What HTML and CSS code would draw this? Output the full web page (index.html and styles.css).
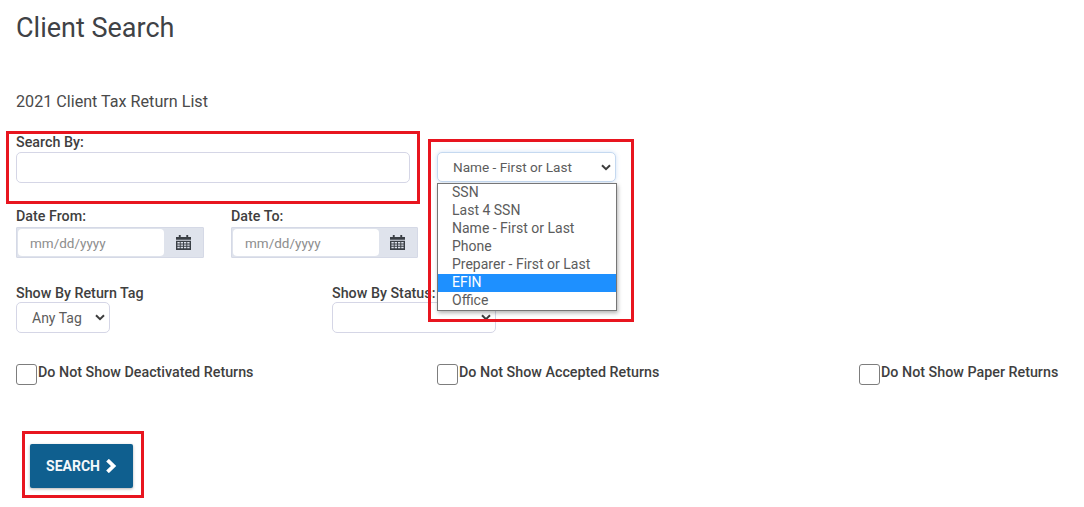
FILE: index.html
```html
<!DOCTYPE html>
<html lang="en">
<head>
<meta charset="utf-8">
<title>Client Search</title>
<link rel="stylesheet" href="styles.css">
</head>
<body>
<main class="page">
  <h1 class="title">Client Search</h1>
  <p class="subtitle">2021 Client Tax Return List</p>

  <div class="search-row">
    <div class="field search-field">
      <label class="label">Search By:</label>
      <div class="input"></div>
    </div>
    <div class="select search-type">
      <span>Name - First or Last</span>
      <svg class="chev" viewBox="0 0 10 7"><path d="M1 1.200 5 5.200 9 1.200" fill="none" stroke="#3d3d3d" stroke-width="2"/></svg>
    </div>
  </div>

  <div class="date-row">
    <div class="field date-field">
      <label class="label">Date From:</label>
      <div class="date-group">
        <div class="date-input">mm/dd/yyyy</div>
        <div class="date-addon">
          <svg class="cal" viewBox="0 0 16 16"><path d="M3 0h2v2h6V0h2v2h3v3H0V2h3z" fill="#3a3f45"/><path fill-rule="evenodd" d="M0 6h16v10H0zM1.500 7.500v1.500h2.500V7.500zm3.500 0v1.500h2.500V7.500zm3.500 0v1.500h2.500V7.500zm3.500 0v1.500h2.500V7.500zM1.500 10v1.500h2.500V10zm3.500 0v1.500h2.500V10zm3.500 0v1.500h2.500V10zm3.500 0v1.500h2.500V10zM1.500 12.500V14h2.500v-1.500zm3.500 0V14h2.500v-1.500zm3.500 0V14h2.500v-1.500zm3.500 0V14h2.500v-1.500z" fill="#3a3f45"/></svg>
        </div>
      </div>
    </div>
    <div class="field date-field">
      <label class="label">Date To:</label>
      <div class="date-group">
        <div class="date-input">mm/dd/yyyy</div>
        <div class="date-addon">
          <svg class="cal" viewBox="0 0 16 16"><path d="M3 0h2v2h6V0h2v2h3v3H0V2h3z" fill="#3a3f45"/><path fill-rule="evenodd" d="M0 6h16v10H0zM1.500 7.500v1.500h2.500V7.500zm3.500 0v1.500h2.500V7.500zm3.500 0v1.500h2.500V7.500zm3.500 0v1.500h2.500V7.500zM1.500 10v1.500h2.500V10zm3.500 0v1.500h2.500V10zm3.500 0v1.500h2.500V10zm3.500 0v1.500h2.500V10zM1.500 12.500V14h2.500v-1.500zm3.500 0V14h2.500v-1.500zm3.500 0V14h2.500v-1.500zm3.500 0V14h2.500v-1.500z" fill="#3a3f45"/></svg>
        </div>
      </div>
    </div>
  </div>

  <div class="show-row">
    <div class="field tag-field">
      <label class="label">Show By Return Tag</label>
      <div class="select tag-select">
        <span>Any Tag</span>
        <svg class="chev" viewBox="0 0 10 7"><path d="M1 1.200 5 5.200 9 1.200" fill="none" stroke="#3d3d3d" stroke-width="2"/></svg>
      </div>
    </div>
    <div class="field status-field">
      <label class="label">Show By Status:</label>
      <div class="select status-select">
        <span></span>
        <svg class="chev" viewBox="0 0 10 7"><path d="M1 1.200 5 5.200 9 1.200" fill="none" stroke="#3d3d3d" stroke-width="2"/></svg>
      </div>
    </div>
  </div>

  <div class="check-row">
    <div class="check"><span class="box"></span><span class="label check-text">Do Not Show Deactivated Returns</span></div>
    <div class="check"><span class="box"></span><span class="label check-text">Do Not Show Accepted Returns</span></div>
    <div class="check"><span class="box"></span><span class="label check-text">Do Not Show Paper Returns</span></div>
  </div>

  <button class="search-btn" type="button">SEARCH
    <svg class="btn-chev" viewBox="0 0 12 14"><path d="M2.500 1.200 8.500 7 2.500 12.800" fill="none" stroke="#fff" stroke-width="3.800"/></svg>
  </button>
</main>

<ul class="dropdown">
  <li>SSN</li>
  <li>Last 4 SSN</li>
  <li>Name - First or Last</li>
  <li>Phone</li>
  <li>Preparer - First or Last</li>
  <li class="active">EFIN</li>
  <li>Office</li>
</ul>

<div class="mark mark-search"></div>
<div class="mark mark-select"></div>
<div class="mark mark-button"></div>
</body>
</html>
```

FILE: styles.css
```css
* { box-sizing: border-box; }

html, body { margin: 0; height: 507px; overflow: hidden; background: #fff; }

body {
  position: relative;
  font-family: Roboto, "Liberation Sans", sans-serif;
  color: #454545;
  font-size: 14px;
}

.page { padding: 11px 16px 0; }

.title {
  margin: 0;
  height: 34px;
  font-size: 27px;
  line-height: 34px;
  font-weight: 400;
  color: #3f4246;
}

.subtitle {
  margin: 47px 0 0;
  height: 20px;
  font-size: 16.150px;
  line-height: 20px;
  color: #4a4a4a;
}

.field { display: flex; flex-direction: column; }

.label {
  font-size: 14.300px;
  line-height: 18px;
  font-weight: 500;
  color: #3f3f3f;
}

.search-row { display: flex; align-items: flex-end; margin-top: 21px; }

.search-field { width: 394px; }
.search-field .label { height: 19px; }

.input {
  height: 31px;
  border: 1px solid #d5d6e6;
  border-radius: 5px;
  background: #fff;
}

.select {
  display: flex;
  align-items: center;
  justify-content: space-between;
  border: 1px solid #d5d6e6;
  border-radius: 5px;
  background: #fff;
  color: #5c5c5c;
  font-size: 14px;
}

.search-type {
  width: 179px;
  height: 30px;
  margin: 0 0 1px 27px;
  padding: 0 4px 0 15px;
  font-size: 13.600px;
  border-color: #c5d9f0;
  box-shadow: 0 0 4px rgba(120, 170, 230, .35);
}

.chev { width: 10px; height: 7px; flex: none; }

.date-row { display: flex; gap: 27px; margin-top: 24px; }

.date-field { width: 188px; }
.date-field + .date-field { width: 187px; }
.date-field .label { height: 20px; }

.date-group {
  display: flex;
  height: 31px;
  padding: 1px;
  border: 1px solid #d5d9e6;
  border-radius: 1px;
  background: #dfe3ec;
}

.date-input {
  width: 146px;
  padding-left: 12px;
  border-radius: 4px;
  background: #fff;
  color: #8d8d8d;
  font-size: 13.500px;
  line-height: 29px;
}

.date-addon { flex: 1; display: flex; align-items: center; justify-content: center; }

.cal { width: 15px; height: 15px; }

.show-row { display: flex; margin-top: 26px; }

.tag-field { width: 316px; }
.status-field { width: 164px; }
.show-row .label { height: 18px; }

.tag-select {
  width: 94px;
  height: 31px;
  padding: 0 4px 0 15px;
}

.status-select {
  width: 164px;
  height: 31px;
  padding: 0 4px 0 0;
}

.check-row {
  display: grid;
  grid-template-columns: 421px 422px 1fr;
  margin-top: 31px;
}

.check { display: flex; align-items: flex-start; }

.box {
  width: 21px;
  height: 21px;
  border: 1px solid #7d7d7d;
  border-radius: 3px;
  background: #fff;
  flex: none;
}

.check-text { margin-left: 1px; line-height: 17px; }

.search-btn {
  display: flex;
  align-items: center;
  justify-content: center;
  gap: 5px;
  width: 103px;
  height: 44px;
  margin: 59px 0 0 14px;
  border: 0;
  border-radius: 2px;
  background: #0f5f8f;
  color: #f4f8fb;
  font-family: inherit;
  font-size: 14px;
  font-weight: 700;
  box-shadow: 0 1px 3px rgba(0, 0, 0, .3);
}

.btn-chev { width: 12px; height: 14px; }

.dropdown {
  position: absolute;
  left: 437px;
  top: 183px;
  width: 180px;
  margin: 0;
  padding: 0;
  list-style: none;
  border: 1px solid #767676;
  background: #fff;
  box-shadow: 1px 2px 4px rgba(0, 0, 0, .3);
  color: #5c5c5c;
  font-size: 14px;
  line-height: 16px;
}

.dropdown li { height: 18px; padding-left: 14px; }
.dropdown .active { background: #1e90ff; color: #fff; }

.mark { position: absolute; border: 3px solid #e8151f; pointer-events: none; }
.mark-search { left: 6px; top: 131px; width: 414px; height: 73px; }
.mark-select { left: 428px; top: 139px; width: 206px; height: 183px; }
.mark-button { left: 22px; top: 431px; width: 122px; height: 67px; }
```
